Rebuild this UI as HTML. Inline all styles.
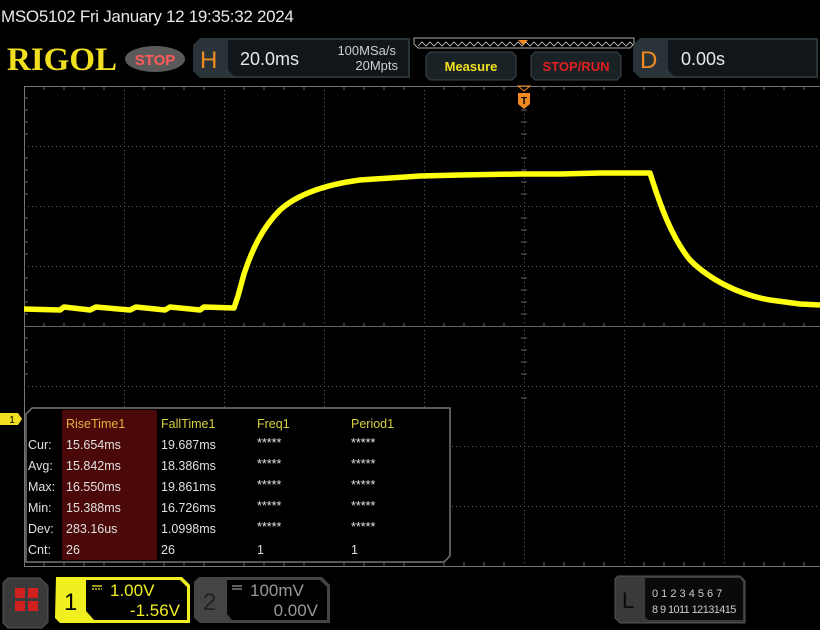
<!DOCTYPE html>
<html><head><meta charset="utf-8"><style>
html,body{margin:0;padding:0;background:#000;width:820px;height:630px;overflow:hidden;font-family:"Liberation Sans",sans-serif}
svg{position:absolute;left:0;top:0}
</style></head><body>
<svg width="820" height="630" viewBox="0 0 820 630" xmlns="http://www.w3.org/2000/svg" font-family="Liberation Sans, sans-serif">
<text x="1" y="22" fill="#e8e8e8" font-size="17" letter-spacing="-0.3">MSO5102  Fri January 12 19:35:32 2024</text>
<text x="7" y="70" fill="#f0e020" font-size="33" font-weight="bold" font-family="Liberation Serif, serif" letter-spacing="0" textLength="110" lengthAdjust="spacingAndGlyphs">RIGOL</text>
<ellipse cx="155" cy="59" rx="30" ry="13" fill="#5a5a5a"/>
<text x="155" y="65" fill="#ff5a5a" font-size="15" text-anchor="middle" font-weight="bold">STOP</text>
<path d="M200 38 H410 V78 H200 L193 71 V45 Z" fill="#2a3338"/>
<path d="M228 40 H408 V76 H234 L228 70 Z" fill="#10161a"/>
<text x="200" y="68" fill="#f08a20" font-size="24">H</text>
<text x="240" y="65" fill="#e8e8e8" font-size="18">20.0ms</text>
<text x="396" y="55" fill="#cfcfcf" font-size="13" text-anchor="end">100MSa/s</text>
<text x="398" y="70" fill="#cfcfcf" font-size="13" text-anchor="end">20Mpts</text>
<path d="M414 38 H634 V44 L630 48 H418 L414 44 Z" fill="none" stroke="#aaa" stroke-width="1"/>
<path d="M418 46 l4 -4 l4 4 l4 -4 l4 4 l4 -4 l4 4 l4 -4 l4 4 l4 -4 l4 4 l4 -4 l4 4 l4 -4 l4 4 l4 -4 l4 4 l4 -4 l4 4 l4 -4 l4 4 l4 -4 l4 4 l4 -4 l4 4 l4 -4 l4 4 l4 -4 l4 4 l4 -4 l4 4 l4 -4 l4 4 l4 -4 l4 4 l4 -4 l4 4 l4 -4 l4 4 l4 -4 l4 4 l4 -4 l4 4 l4 -4 l4 4 l4 -4 l4 4 l4 -4 l4 4 l4 -4 l4 4 l4 -4 l4 4 l4 -4 l4 4 l4 -4 l4 4 l4 -4 l4 4 l4 -4 l4 4" fill="none" stroke="#ccc" stroke-width="0.8"/>
<path d="M518 40 h10 l-5 5 Z" fill="#f08a20"/>
<path d="M430 52 H512 L516 56 V76 L512 80 H430 L426 76 V56 Z" fill="#1a2226" stroke="#3a4650"/>
<text x="471" y="71" fill="#f0e020" font-size="13" font-weight="bold" text-anchor="middle">Measure</text>
<path d="M535 52 H617 L621 56 V76 L617 80 H535 L531 76 V56 Z" fill="#1a2226" stroke="#3a4650"/>
<text x="576" y="71" fill="#e02020" font-size="13" font-weight="bold" text-anchor="middle">STOP/RUN</text>
<path d="M640 38 H818 V78 H640 L633 71 V45 Z" fill="#2a3338"/>
<path d="M668 40 H816 V76 H674 L668 70 Z" fill="#10161a"/>
<text x="640" y="68" fill="#f08a20" font-size="24">D</text>
<text x="681" y="65" fill="#e8e8e8" font-size="18">0.00s</text>
<g stroke="#777" stroke-width="1">
<line x1="24" y1="86.5" x2="820" y2="86.5"/>
<line x1="24.5" y1="86" x2="24.5" y2="566"/>
<line x1="24" y1="566.5" x2="820" y2="566.5"/>
</g>
<g stroke="#666" stroke-width="1" stroke-dasharray="1,3">
<line x1="124.5" y1="86" x2="124.5" y2="566"/><line x1="224.5" y1="86" x2="224.5" y2="566"/><line x1="324.5" y1="86" x2="324.5" y2="566"/><line x1="424.5" y1="86" x2="424.5" y2="566"/><line x1="524.5" y1="86" x2="524.5" y2="566"/><line x1="624.5" y1="86" x2="624.5" y2="566"/><line x1="724.5" y1="86" x2="724.5" y2="566"/>
<line x1="24" y1="146.5" x2="820" y2="146.5"/><line x1="24" y1="206.5" x2="820" y2="206.5"/><line x1="24" y1="266.5" x2="820" y2="266.5"/><line x1="24" y1="386.5" x2="820" y2="386.5"/><line x1="24" y1="446.5" x2="820" y2="446.5"/><line x1="24" y1="506.5" x2="820" y2="506.5"/>
</g>
<g stroke="#777" stroke-width="1">
<line x1="24" y1="326.5" x2="820" y2="326.5" stroke="#666"/>
</g>
<g stroke="#666" stroke-width="1">
<path d="M44 86v4M64 86v4M84 86v4M104 86v4M144 86v4M164 86v4M184 86v4M204 86v4M244 86v4M264 86v4M284 86v4M304 86v4M344 86v4M364 86v4M384 86v4M404 86v4M444 86v4M464 86v4M484 86v4M504 86v4M544 86v4M564 86v4M584 86v4M604 86v4M644 86v4M664 86v4M684 86v4M704 86v4M744 86v4M764 86v4M784 86v4M804 86v4"/>
<path d="M44 566v-4M64 566v-4M84 566v-4M104 566v-4M144 566v-4M164 566v-4M184 566v-4M204 566v-4M244 566v-4M264 566v-4M284 566v-4M304 566v-4M344 566v-4M364 566v-4M384 566v-4M404 566v-4M444 566v-4M464 566v-4M484 566v-4M504 566v-4M544 566v-4M564 566v-4M584 566v-4M604 566v-4M644 566v-4M664 566v-4M684 566v-4M704 566v-4M744 566v-4M764 566v-4M784 566v-4M804 566v-4"/>
<path d="M24 98h4M24 110h4M24 122h4M24 134h4M24 158h4M24 170h4M24 182h4M24 194h4M24 218h4M24 230h4M24 242h4M24 254h4M24 278h4M24 290h4M24 302h4M24 314h4M24 338h4M24 350h4M24 362h4M24 374h4"/>
<path d="M521 98h6M521 110h6M521 122h6M521 134h6M521 158h6M521 170h6M521 182h6M521 194h6M521 218h6M521 230h6M521 242h6M521 254h6M521 278h6M521 290h6M521 302h6M521 314h6M521 338h6M521 350h6M521 362h6M521 374h6M521 398h6"/>
<path d="M44 326v-3M64 326v-3M84 326v-3M104 326v-3M144 326v-3M164 326v-3M184 326v-3M204 326v-3M244 326v-3M264 326v-3M284 326v-3M304 326v-3M344 326v-3M364 326v-3M384 326v-3M404 326v-3M444 326v-3M464 326v-3M484 326v-3M504 326v-3M544 326v-3M564 326v-3M584 326v-3M604 326v-3M644 326v-3M664 326v-3M684 326v-3M704 326v-3M744 326v-3M764 326v-3M784 326v-3M804 326v-3"/>
</g>
<path d="M518 86 h12 l-6 5 Z" fill="none" stroke="#f08a20"/>
<path d="M518 93 H530 V104 L524 109 L518 104 Z" fill="#f08a20"/>
<text x="524" y="104" fill="#000" font-size="10" font-weight="bold" text-anchor="middle">T</text>
<path d="M24 309 L60 310 L64 307 L90 310 L96 307 L130 310 L136 307 L165 310 L170 307 L200 310 L204 307 L234 308 L238 296 L244 274 C252 250 262 228 280 210 C300 192 330 184 360 180 L420 176 L460 175 L520 174 L560 174 L600 173 L650 173 C660 205 672 238 690 260 C710 280 740 295 770 300 L800 304 L820 305" fill="none" stroke="#ffff10" stroke-width="5.5" stroke-linejoin="round"/>
<path d="M0 413 H18 L22 419 L18 425 H0 Z" fill="#f0e020"/>
<text x="12" y="423" fill="#000" font-size="10" text-anchor="middle">1</text>
<path d="M32 408 H450 V556 L444 562 H26 V414 Z" fill="#000" stroke="#777" stroke-width="1.5"/>
<rect x="62" y="410" width="95" height="150" fill="#4a0808"/>
<g font-size="12.5">
<text x="66" y="428" fill="#e8b040">RiseTime1</text>
<text x="161" y="428" fill="#d8d040">FallTime1</text>
<text x="257" y="428" fill="#d8d040">Freq1</text>
<text x="351" y="428" fill="#d8d040">Period1</text>
<g fill="#e0e0e0">
<text x="28" y="449">Cur:</text><text x="66" y="449">15.654ms</text><text x="161" y="449">19.687ms</text><text x="257" y="447">*****</text><text x="351" y="447">*****</text>
<text x="28" y="470">Avg:</text><text x="66" y="470">15.842ms</text><text x="161" y="470">18.386ms</text><text x="257" y="468">*****</text><text x="351" y="468">*****</text>
<text x="28" y="491">Max:</text><text x="66" y="491">16.550ms</text><text x="161" y="491">19.861ms</text><text x="257" y="489">*****</text><text x="351" y="489">*****</text>
<text x="28" y="512">Min:</text><text x="66" y="512">15.388ms</text><text x="161" y="512">16.726ms</text><text x="257" y="510">*****</text><text x="351" y="510">*****</text>
<text x="28" y="533">Dev:</text><text x="66" y="533">283.16us</text><text x="161" y="533">1.0998ms</text><text x="257" y="531">*****</text><text x="351" y="531">*****</text>
<text x="28" y="554">Cnt:</text><text x="66" y="554">26</text><text x="161" y="554">26</text><text x="257" y="554">1</text><text x="351" y="554">1</text>
</g></g>
<path d="M8 578 H40 L48 586 V622 L42 628 H8 L3 623 V583 Z" fill="#3a3a3a" stroke="#555"/>
<rect x="15" y="588" width="10" height="10" fill="#d02020"/><rect x="28" y="588" width="10" height="10" fill="#d02020"/>
<rect x="15" y="601" width="10" height="10" fill="#d02020"/><rect x="28" y="601" width="10" height="10" fill="#d02020"/>
<path d="M56 577 H182 L190 585 V623 H60 L55 618 Z" fill="#f0f020"/>
<path d="M86 580 H180 L187 587 V620 H94 L86 611 Z" fill="#000"/>
<text x="64" y="610" fill="#000" font-size="24">1</text>
<path d="M92 586h10M92 589h2M95 589h2M98 589h2M101 589h1" stroke="#f0f020" stroke-width="1.3"/>
<text x="110" y="596" fill="#f0f020" font-size="17">1.00V</text>
<text x="180" y="616" fill="#f0f020" font-size="17" text-anchor="end">-1.56V</text>
<path d="M199 577 H322 L330 585 V623 H200 L194 618 V582 Z" fill="#444"/>
<path d="M227 580 H320 L327 587 V620 H232 L227 614 Z" fill="#000"/>
<text x="203" y="610" fill="#222" font-size="24">2</text>
<path d="M232 586h10M232 589h10" stroke="#999" stroke-width="1.3"/>
<text x="250" y="596" fill="#999" font-size="17">100mV</text>
<text x="318" y="616" fill="#999" font-size="17" text-anchor="end">0.00V</text>
<path d="M618 576 H740 L745 581 V623 H620 L615 618 V579 Z" fill="#3a3a3a" stroke="#555"/>
<path d="M645 578 H740 L743 582 V620 H648 L645 617 Z" fill="#0a0a0a"/>
<text x="622" y="608" fill="#0a0a0a" font-size="22">L</text>
<text x="652" y="597" fill="#ccc" font-size="11">0 1 2 3  4 5 6 7</text>
<text x="652" y="613" fill="#ccc" font-size="11" letter-spacing="-0.6">8 9 1011 12131415</text>
</svg>
</body></html>
